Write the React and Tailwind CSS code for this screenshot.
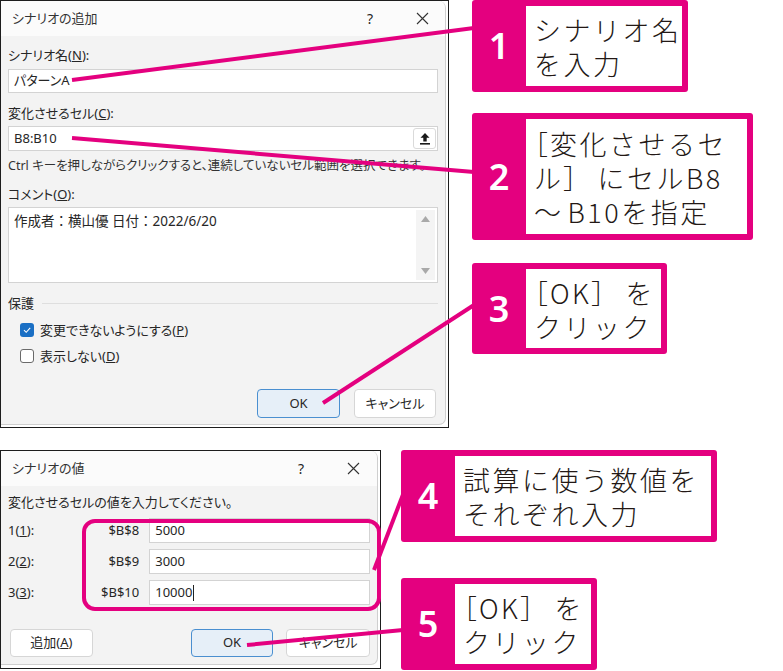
const ui =
  "font-['Noto_Sans','Noto_Sans_CJK_JP',sans-serif] text-[13px] text-[#262626] [font-feature-settings:'palt']";

function CloseIcon() {
  return (
    <svg width="13" height="13" viewBox="0 0 13 13">
      <path d="M1 1 L12 12 M12 1 L1 12" stroke="#333" strokeWidth="1.1" />
    </svg>
  );
}

function TitleBar({ title, qClass, xClass }) {
  return (
    <div className="flex h-[35px] shrink-0 items-center bg-[#fbfbfb] pl-[11px]">
      <span className="text-[#333]">{title}</span>
      <span className={qClass}>?</span>
      <span className={xClass}>
        <CloseIcon />
      </span>
    </div>
  );
}

function Checkbox({ checked }) {
  if (checked) {
    return (
      <span className="flex h-[14px] w-[14px] items-center justify-center rounded-[3px] bg-[#1a6fc4]">
        <svg width="10" height="10" viewBox="0 0 10 10">
          <path d="M2 5.2 L4.2 7.3 L8.2 2.8" fill="none" stroke="#fff" strokeWidth="1.1" />
        </svg>
      </span>
    );
  }
  return <span className="h-[14px] w-[14px] rounded-[3px] border border-[#6a6a6a] bg-white" />;
}

function ScenarioAddDialog() {
  return (
    <div className="h-[428px] w-[449px] shrink-0 border-[1.5px] border-[#1d1d1d] bg-white">
      <div className="flex h-[424px] w-[445px] flex-col overflow-hidden rounded-r-[7px] border-r border-b border-[#cfcfcf] bg-[#f3f3f3]">
        <TitleBar title="シナリオの追加" qClass="ml-auto mr-[43px] text-[14px]" xClass="mr-[16px]" />
        <div className="flex flex-col px-[7px]">
          <div className="mt-[10px] leading-[18px]">
            シナリオ名(<u>N</u>):
          </div>
          <div className="mt-[5px] flex h-[24px] items-center border border-[#d3d3d3] bg-white pl-[5px]">
            パターンA
          </div>
          <div className="mt-[11px] leading-[18px]">
            変化させるセル(<u>C</u>):
          </div>
          <div className="mt-[4px] flex h-[25px] items-center border border-[#d3d3d3] bg-white pl-[5px]">
            <span>B8:B10</span>
            <span className="ml-auto mr-[1px] flex h-[21px] w-[23px] items-center justify-center rounded-[3px] border border-[#dadada] bg-white">
              <svg width="12" height="13" viewBox="0 0 12 13">
                <path d="M6 1 L1.5 5.8 H4.3 V9.5 H7.7 V5.8 H10.5 Z" fill="#1a1a1a" />
                <rect x="1" y="11" width="10" height="1.6" fill="#1a1a1a" />
              </svg>
            </span>
          </div>
          <div className="mt-[6px] whitespace-nowrap leading-[18px] text-[12.5px] text-[#333]">
            Ctrl キーを押しながらクリックすると、連続していないセル範囲を選択できます。
          </div>
          <div className="mt-[10px] leading-[18px]">
            コメント(<u>O</u>):
          </div>
          <div className="mt-[4px] flex h-[76px] border border-[#d3d3d3] bg-white">
            <div className="flex-1 pl-[5px] pt-[4px] text-[13.5px] leading-[18px] [font-feature-settings:normal]">
              作成者：横山優 日付：2022/6/20
            </div>
            <div className="my-[2px] mr-[2px] flex w-[19px] flex-col items-center justify-between bg-[#f4f4f4] py-[6px]">
              <svg width="9" height="6" viewBox="0 0 9 6">
                <path d="M4.5 0 L9 6 H0 Z" fill="#a9a9a9" />
              </svg>
              <svg width="9" height="6" viewBox="0 0 9 6">
                <path d="M0 0 H9 L4.5 6 Z" fill="#a9a9a9" />
              </svg>
            </div>
          </div>
          <div className="mt-[11px] flex items-center leading-[18px]">
            <span>保護</span>
            <span className="ml-[8px] h-px flex-1 bg-[#dedede]" />
          </div>
          <div className="mt-[9px] flex items-center gap-[6px] pl-[12px] leading-[18px]">
            <Checkbox checked />
            <span>
              変更できないようにする(<u>P</u>)
            </span>
          </div>
          <div className="mt-[8px] flex items-center gap-[6px] pl-[12px] leading-[18px]">
            <Checkbox />
            <span>
              表示しない(<u>D</u>)
            </span>
          </div>
          <div className="mr-[2px] mt-[24px] flex justify-end gap-[14px]">
            <div className="flex h-[29px] w-[83px] items-center justify-center rounded-[4px] border border-[#4a8fd0] bg-[#e6eff8]">
              OK
            </div>
            <div className="flex h-[29px] w-[82px] items-center justify-center rounded-[4px] border border-[#d6d6d6] bg-white">
              キャンセル
            </div>
          </div>
        </div>
      </div>
    </div>
  );
}

function ValueRow({ label, mnemonic, cell, value, cursor, className }) {
  return (
    <div className={"flex h-[25px] items-center " + className}>
      <span className="w-[60px]">
        {label}(<u>{mnemonic}</u>):
      </span>
      <span className="w-[75px] text-right">{cell}</span>
      <div className="ml-[10px] flex h-[25px] w-[227px] items-center border border-[#d3d3d3] bg-white pl-[5px]">
        {value}
        {cursor && <span className="ml-[1px] h-[16px] w-px bg-[#222]" />}
      </div>
    </div>
  );
}

function ScenarioValueDialog() {
  return (
    <div className="h-[219px] w-[381px] shrink-0 border-[1.5px] border-[#1d1d1d] bg-white">
      <div className="flex h-[214px] w-[377px] flex-col overflow-hidden rounded-r-[7px] border-r border-b border-[#cfcfcf] bg-[#f3f3f3]">
        <TitleBar title="シナリオの値" qClass="ml-auto mr-[43px] text-[14px]" xClass="mr-[17px]" />
        <div className="flex flex-col px-[7px]">
          <div className="mt-[7px] leading-[18px]">変化させるセルの値を入力してください。</div>
          <ValueRow label="1" mnemonic="1" cell="$B$8" value="5000" className="mt-[7px]" />
          <ValueRow label="2" mnemonic="2" cell="$B$9" value="3000" className="mt-[6px]" />
          <ValueRow label="3" mnemonic="3" cell="$B$10" value="10000" cursor className="mt-[6px]" />
          <div className="mt-[24px] flex items-center">
            <div className="ml-[2px] flex h-[28px] w-[83px] items-center justify-center rounded-[4px] border border-[#d6d6d6] bg-white">
              追加(<u>A</u>)
            </div>
            <div className="ml-[98px] flex h-[28px] w-[83px] items-center justify-center rounded-[4px] border border-[#4a8fd0] bg-[#e6eff8]">
              OK
            </div>
            <div className="ml-[13px] flex h-[28px] w-[84px] items-center justify-center rounded-[4px] border border-[#d6d6d6] bg-white">
              キャンセル
            </div>
          </div>
        </div>
      </div>
    </div>
  );
}

// brackets are set narrow; "_" is a wide gap, "^" a narrow one
function CalloutLine({ text }) {
  const parts = text.split(/([［］_^])/).filter(Boolean);
  return (
    <div className="whitespace-nowrap">
      {parts.map((p, i) => {
        if (p === "_") return <span key={i} className="inline-block w-[18px]" />;
        if (p === "^") return <span key={i} className="inline-block w-[4px]" />;
        if (p === "［" || p === "］")
          return (
            <span key={i} className="[font-feature-settings:'palt']">
              {p}
            </span>
          );
        return <span key={i}>{p}</span>;
      })}
    </div>
  );
}

function Callout({ num, lines, className }) {
  return (
    <div className={"flex rounded-[3px] bg-[#e4007f] py-[6px] pr-[6px] " + className}>
      <div className="flex w-[54px] shrink-0 items-center justify-center font-['Noto_Sans',sans-serif] text-[36px] font-semibold text-white">
        {num}
      </div>
      <div className="flex flex-1 flex-col justify-center bg-white pl-[8px] pt-[2px] font-['Noto_Sans_CJK_JP',sans-serif] text-[27px] font-light leading-[34px] tracking-[2.5px] text-[#231815] [font-feature-settings:normal]">
        {lines.map((l) => (
          <CalloutLine key={l} text={l} />
        ))}
      </div>
    </div>
  );
}

export default function App() {
  const pink = "#e4007f";
  return (
    <div className={"relative h-[671px] w-[783px] overflow-hidden bg-white " + ui}>
      <div className="flex">
        <ScenarioAddDialog />
        <div className="ml-[23px] flex flex-col">
          <Callout num="1" lines={["シナリオ名", "を入力"]} className="h-[92px] w-[216px]" />
          <Callout
            num="2"
            lines={["［変化させるセ", "ル］_にセルB8", "～^B10を指定"]}
            className="mt-[21px] h-[127px] w-[281px]"
          />
          <Callout num="3" lines={["［OK］_を", "クリック"]} className="mt-[23px] h-[91px] w-[195px]" />
        </div>
      </div>
      <div className="mt-[22px] flex">
        <ScenarioValueDialog />
        <div className="ml-[20px] flex flex-col">
          <Callout num="4" lines={["試算に使う数値を", "それぞれ入力"]} className="h-[92px] w-[316px]" />
          <Callout num="5" lines={["［OK］_を", "クリック"]} className="mt-[36px] h-[92px] w-[196px]" />
        </div>
      </div>
      <svg className="pointer-events-none absolute left-0 top-0" width="783" height="671">
        <g stroke={pink} strokeWidth="4" fill="none">
          <path d="M72 80 L474 28" />
          <path d="M72 138 L474 172" />
          <path d="M323 403 L474 305" />
          <rect x="84" y="521" width="295" height="88" rx="11" />
          <path d="M374 570 L404 492" />
          <path d="M247 645 L403 630" />
        </g>
      </svg>
    </div>
  );
}
